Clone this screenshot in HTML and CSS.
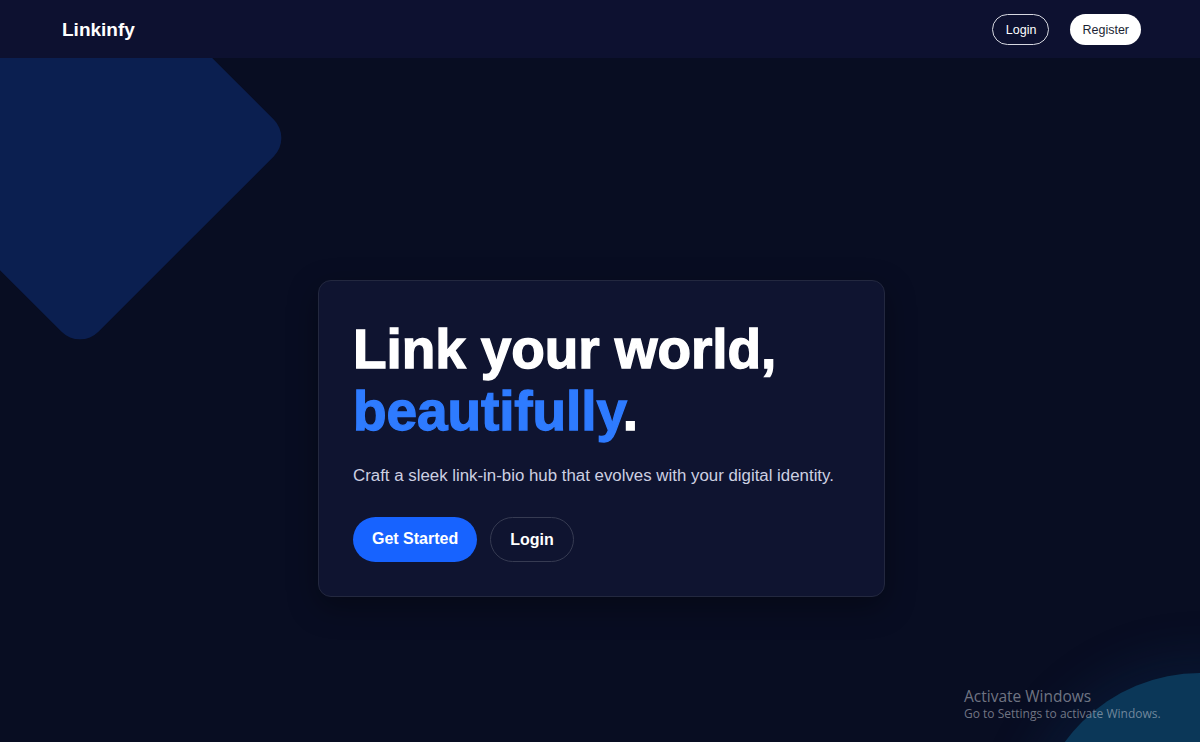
FILE: index.html
```html
<!DOCTYPE html>
<html lang="en">
<head>
<meta charset="utf-8">
<title>Linkinfy</title>
<link rel="stylesheet" href="styles.css">
</head>
<body>
<div class="page">
  <div class="shape-diamond"></div>
  <div class="shape-circle"></div>
  <header class="nav">
    <a class="logo" href="#">Linkinfy</a>
    <nav class="nav-actions">
      <a class="nav-btn nav-btn-outline" href="#">Login</a>
      <a class="nav-btn nav-btn-solid" href="#">Register</a>
    </nav>
  </header>
  <main class="hero">
    <section class="card">
      <h1 class="title">Link your world,<br><span class="accent">beautifully</span>.</h1>
      <p class="subtitle">Craft a sleek link-in-bio hub that evolves with your digital identity.</p>
      <div class="actions">
        <a class="btn btn-primary" href="#">Get Started</a>
        <a class="btn btn-ghost" href="#">Login</a>
      </div>
    </section>
  </main>
  <div class="watermark">
    <div class="wm-title">Activate Windows</div>
    <div class="wm-sub">Go to Settings to activate Windows.</div>
  </div>
</div>
</body>
</html>
```

FILE: styles.css
```css
* { box-sizing: border-box; }
html, body { margin: 0; padding: 0; }
body {
  background: #080d22;
  font-family: "Liberation Sans", Arial, sans-serif;
  color: #fff;
  overflow: hidden;
}
a { text-decoration: none; color: inherit; }
.page {
  position: relative;
  width: 1200px;
  height: 742px;
  overflow: hidden;
}
.shape-diamond {
  position: absolute;
  width: 300px;
  height: 300px;
  left: -70px;
  top: -12px;
  background: #0b1f50;
  border-radius: 26px;
  transform: rotate(45deg);
}
.shape-circle {
  position: absolute;
  width: 334px;
  height: 334px;
  left: 1033px;
  top: 673px;
  border-radius: 50%;
  background: #0b3758;
  box-shadow: 0 0 40px 22px rgba(14, 50, 90, 0.22);
}
.nav {
  position: relative;
  z-index: 2;
  height: 58px;
  background: #0d1130;
  display: flex;
  align-items: center;
  justify-content: space-between;
  padding: 0 59px 0 62px;
}
.logo {
  font-size: 19px;
  font-weight: 700;
  color: #fff;
  padding-top: 1px;
}
.nav-actions {
  display: flex;
  gap: 21px;
  align-items: center;
}
.nav-btn {
  height: 31px;
  display: flex;
  align-items: center;
  border-radius: 999px;
  font-size: 12.5px;
}
.nav-btn-outline {
  border: 1px solid #d6d8e0;
  color: #fff;
  padding: 1px 12px 0 12.5px;
}
.nav-btn-solid {
  background: #fff;
  color: #1b1f33;
  padding: 1px 12px 0;
}
.hero {
  position: relative;
  z-index: 1;
  display: flex;
  justify-content: center;
  padding-top: 222px;
  padding-left: 3px;
}
.card {
  width: 567px;
  background: #0f1430;
  border: 1px solid #23283f;
  border-radius: 13px;
  padding: 37px 34px 34px 34px;
  box-shadow: 0 10px 30px rgba(0, 0, 0, 0.35);
}
.title {
  margin: 0 0 20px 0;
  font-size: 55px;
  line-height: 62px;
  font-weight: 700;
  letter-spacing: -0.1px;
  -webkit-text-stroke: 1.3px currentColor;
  color: #fff;
}
.accent { color: #2e7bff; }
.subtitle {
  margin: 0 0 28px 0;
  font-size: 16.85px;
  line-height: 27px;
  color: #cdd0e2;
  white-space: nowrap;
}
.actions {
  display: flex;
  gap: 13px;
}
.btn {
  height: 45px;
  display: flex;
  align-items: center;
  border-radius: 999px;
  font-size: 16px;
  font-weight: 700;
  color: #fff;
}
.btn-primary {
  background: #1763ff;
  padding: 0 19px 2px 19px;
}
.btn-ghost {
  border: 1px solid #363b52;
  padding: 0 19px;
}
.watermark {
  position: absolute;
  z-index: 3;
  left: 964px;
  top: 686px;
  font-family: "Open Sans", "Noto Sans", sans-serif;
  color: rgba(200, 204, 214, 0.55);
}
.wm-title {
  font-size: 15.5px;
  line-height: 20px;
}
.wm-sub {
  font-size: 12px;
  line-height: 16px;
}
```
